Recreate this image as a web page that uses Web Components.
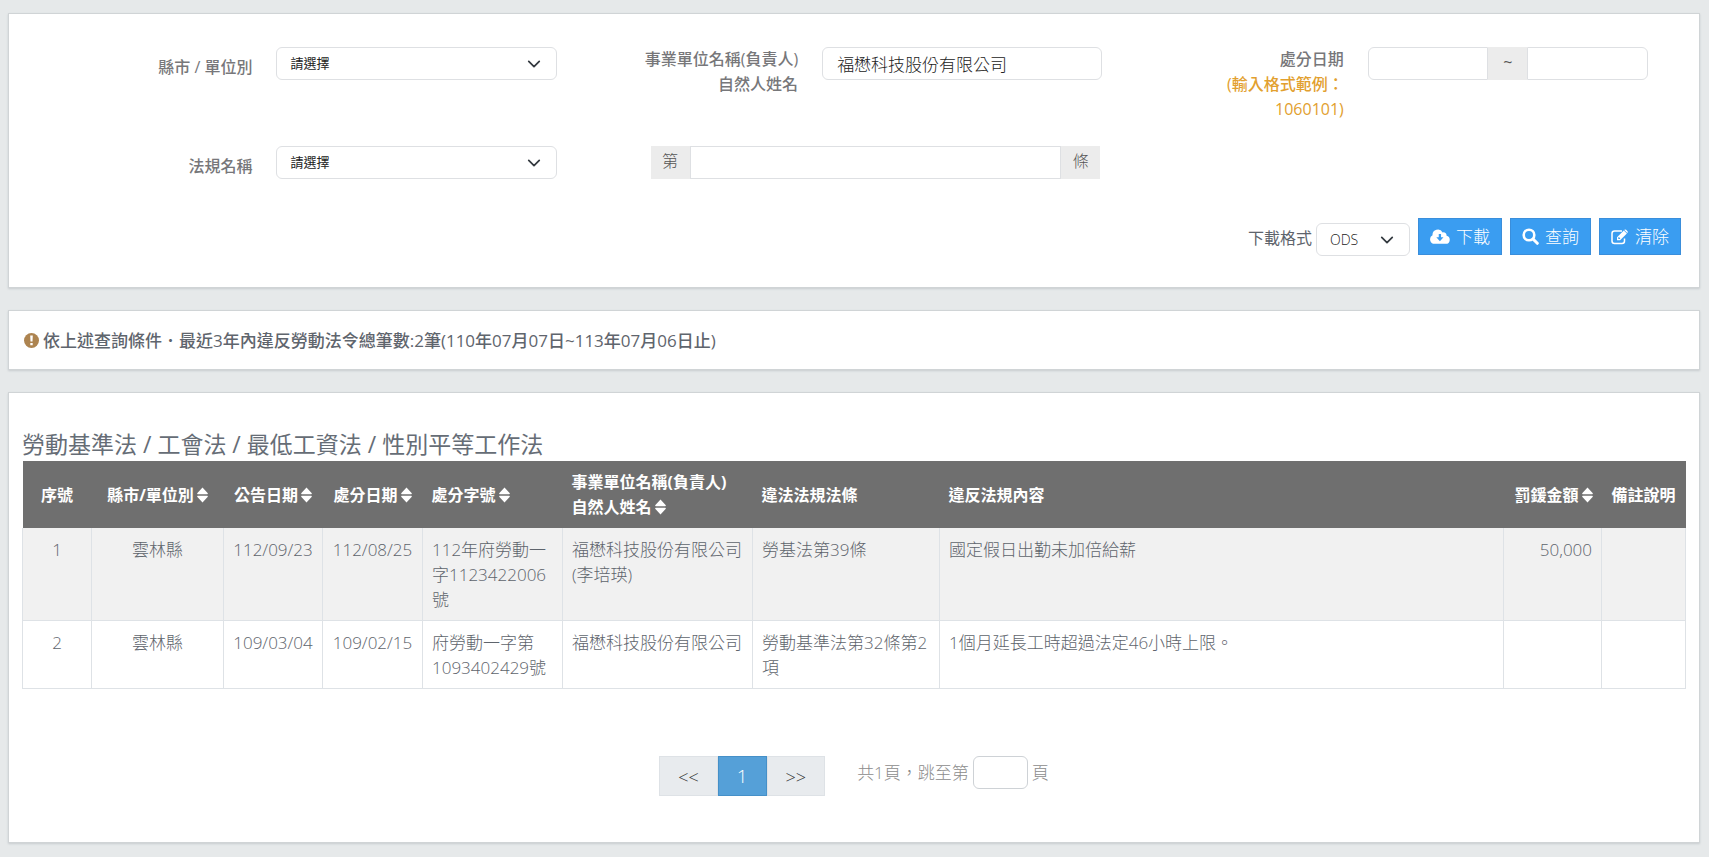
<!DOCTYPE html>
<html lang="zh-Hant">
<head>
<meta charset="utf-8">
<title>違反勞動法令查詢</title>
<style>
  body {
    margin: 0;
    background: #e6e9ea;
    color: #5e646c;
    font: 300 17px/25px "Open Sans", "Noto Sans CJK TC", sans-serif;
  }
</style>
</head>
<body>
<labor-page></labor-page>

<script>
const define = (name, html) => customElements.define(name, class extends HTMLElement {
  constructor() {
    super();
    const t = document.createElement('template');
    t.innerHTML = html;
    this.attachShadow({ mode: 'open' }).append(t.content.cloneNode(true));
  }
});

const base = `
  * { box-sizing: border-box; }
  input, select, button { font: inherit; margin: 0; }
  input {
    width: 100%; min-width: 0; height: 33px; padding: 0 14px;
    border: 1px solid #dee0e3; border-radius: 6px; background: #fff; color: #222; outline: 0;
  }`;

const selectCss = `
  select {
    appearance: none; width: 100%; height: 33px; padding: 0 13px; color: #222;
    font-size: 13px; font-weight: 400; line-height: 31px;
    border: 1px solid #dee0e3; border-radius: 6px;
    background: #fff url("data:image/svg+xml,%3Csvg xmlns='http://www.w3.org/2000/svg' viewBox='0 0 16 16'%3E%3Cpath fill='none' stroke='%23343a40' stroke-linecap='round' stroke-linejoin='round' stroke-width='2' d='m2 5 6 6 6-6'/%3E%3C/svg%3E") no-repeat right 15px center / 14px 14px;
  }`;

/* White card with a thin edge */
define('ui-panel', `
  <style>
    :host { display: block; background: #fff; border: 1px solid #d0d4d6; box-shadow: 0 1px 2px #c8cccf; }
  </style>
  <slot></slot>`);

/* Up and down triangles for sortable columns */
define('sort-mark', `
  <style>
    :host { display: inline-block; margin-left: 3px; }
    svg { display: block; }
  </style>
  <svg width="11" height="16" viewBox="0 0 11 16" fill="#fff" aria-hidden="true">
    <path d="M5.500 .5 10.800 6.300Q11 7.200 10.200 7.200H.8Q0 7.200 .2 6.300ZM5.500 15.500 10.800 9.700Q11 8.800 10.200 8.800H.8Q0 8.800 .2 9.700Z"/>
  </svg>`);

define('search-form', `
  <style>
    ${base} ${selectCss}
    :host { display: block; padding: 33px 18px 31px 14px; }
    .grid { display: grid; grid-template-columns: repeat(3, 1fr); row-gap: 24px; padding-right: 21px; }
    .field { display: flex; gap: 24px; padding-right: 12px; align-items: flex-start; }
    .field > label { flex: 0 0 43%; text-align: right; font-size: 16px; font-weight: 500; color: #77777a; }
    .field > label.low { padding-top: 8px; }
    .field > div { flex: 1; min-width: 0; }
    .hint { color: #e2a02f; }
    .group { display: flex; }
    .group span { flex: 0 0 39px; background: #ececec; text-align: center; line-height: 31px; color: #555; font-size: 16px; }
    .article { padding: 0 14px 0 15%; }
    .article input { border-radius: 0; }
    .dates span { font-weight: 400; }
    .dates input:first-child { border-radius: 6px 0 0 6px; }
    .dates input:last-child { border-radius: 0 6px 6px 0; }
    .actions { display: flex; justify-content: flex-end; gap: 8px; margin-top: 39px; }
    .format { display: flex; gap: 4px; padding-top: 5px; font-size: 16px; font-weight: 400; line-height: 31px; }
    .format select { width: 94px; font-size: 14px; font-weight: 300; background-position: right 15px center; }
    button {
      display: flex; align-items: center; gap: 6px; height: 37px; padding: 0 11px;
      color: #fff; background: #3a9df1; border: 1px solid #3a8edb; border-radius: 0;
    }
    svg { display: block; fill: #fff; }
  </style>
  <form>
    <div class="grid">
      <div class="field"><label class="low" for="city">縣市 / 單位別</label>
        <div><select id="city"><option>請選擇</option></select></div></div>
      <div class="field"><label for="unit">事業單位名稱(負責人)<br>自然人姓名</label>
        <div><input id="unit" value="福懋科技股份有限公司"></div></div>
      <div class="field"><label for="from">處分日期<br><span class="hint">(輸入格式範例：<br>1060101)</span></label>
        <div class="group dates"><input id="from"><span>~</span><input aria-label="處分日期迄"></div></div>
      <div class="field"><label class="low" for="law">法規名稱</label>
        <div><select id="law"><option>請選擇</option></select></div></div>
      <div class="group article"><span>第</span><input aria-label="條號"><span>條</span></div>
    </div>
    <div class="actions">
      <div class="format"><label for="fmt">下載格式</label><select id="fmt"><option>ODS</option></select></div>
      <button type="button">
        <svg width="20" height="15" viewBox="0 0 19 14" aria-hidden="true"><path fill-rule="evenodd" d="M4.300 14A4.300 4.300 0 0 1 2.400 5.900 5.100 5.100 0 0 1 12 3.100 2.900 2.900 0 0 1 15.700 6.300 3.900 3.900 0 0 1 15 14ZM8.300 4.600V7.800H6L9.400 11.400 12.800 7.800H10.500V4.600Z"/></svg>下載</button>
      <button type="button">
        <svg width="17" height="17" viewBox="0 0 17 17" aria-hidden="true"><circle cx="7" cy="7" r="5.300" fill="none" stroke="#fff" stroke-width="2.600"/><path d="m11 11 4.300 4.300" stroke="#fff" stroke-width="3" stroke-linecap="round"/></svg>查詢</button>
      <button type="button">
        <svg width="18" height="16" viewBox="0 0 18 16" aria-hidden="true"><path fill="none" stroke="#fff" stroke-width="1.500" d="M11 2H3.500Q1 2 1 4.500V12Q1 14.500 3.500 14.500H11Q13.500 14.500 13.500 12V9.500"/><path fill-rule="evenodd" d="M6 8.200 12.800 1.400 15.900 4.500 9.100 11.300H6ZM7.300 8.600V10H8.700L9.300 9.400 7.900 8ZM13.500.8Q14.300 0 15.100.8L16.500 2.200Q17.300 3 16.500 3.800L16.300 4 13.300 1Z"/></svg>清除</button>
    </div>
  </form>`);

define('result-notice', `
  <style>
    :host { display: flex; align-items: center; gap: 4px; padding: 17px 15px 16px; font-weight: 500; color: #5f656d; }
    svg { flex: none; }
  </style>
  <svg width="15" height="15" viewBox="0 0 15 15" aria-hidden="true"><circle cx="7.500" cy="7.500" r="7.500" fill="#ad8450"/><path fill="#fff" d="M6.200 2.600H8.800L8.500 8.600H6.500ZM6.300 9.900H8.700V12.200H6.300Z"/></svg>
  <span>依上述查詢條件．最近3年內違反勞動法令總筆數:2筆(110年07月07日~113年07月06日止)</span>`);

define('result-table', `
  <style>
    ${base}
    :host { display: block; }
    h2 { margin: 0; font-size: 23px; line-height: 34px; font-weight: 400; color: #666d76; }
    table { width: 100%; border-collapse: collapse; table-layout: fixed; }
    th, td { padding: 9px 9px 8px; text-align: left; }
    th { background: #6f6f6f; color: #fff; font-size: 16px; font-weight: 700; white-space: nowrap; }
    th sort-mark { vertical-align: -2px; }
    td { vertical-align: top; border: 1px solid #dee2e6; border-top: 0; }
    tbody tr:first-child td { background: #f1f1f1; }
    .c { text-align: center; }
    .r { text-align: right; }
  </style>
  <h2>勞動基準法 / 工會法 / 最低工資法 / 性別平等工作法</h2>
  <table>
    <colgroup>
      <col style="width:69px"><col style="width:132px"><col style="width:99px"><col style="width:100px"><col style="width:140px">
      <col style="width:190px"><col style="width:187px"><col><col style="width:98px"><col style="width:84px">
    </colgroup>
    <thead><tr>
      <th class="c">序號</th><th class="c">縣市/單位別<sort-mark></sort-mark></th><th class="c">公告日期<sort-mark></sort-mark></th>
      <th class="c">處分日期<sort-mark></sort-mark></th><th>處分字號<sort-mark></sort-mark></th>
      <th>事業單位名稱(負責人)<br>自然人姓名<sort-mark></sort-mark></th><th>違法法規法條</th><th>違反法規內容</th>
      <th class="r">罰鍰金額<sort-mark></sort-mark></th><th class="c">備註說明</th>
    </tr></thead>
    <tbody>
      <tr><td class="c">1</td><td class="c">雲林縣</td><td class="c">112/09/23</td><td class="c">112/08/25</td><td>112年府勞動一字1123422006號</td>
        <td>福懋科技股份有限公司(李培瑛)</td><td>勞基法第39條</td><td>國定假日出勤未加倍給薪</td><td class="r">50,000</td><td></td></tr>
      <tr><td class="c">2</td><td class="c">雲林縣</td><td class="c">109/03/04</td><td class="c">109/02/15</td><td>府勞動一字第1093402429號</td>
        <td>福懋科技股份有限公司</td><td>勞動基準法第32條第2項</td><td>1個月延長工時超過法定46小時上限。</td><td class="r"></td><td></td></tr>
    </tbody>
  </table>`);

define('page-nav', `
  <style>
    ${base}
    :host { display: flex; justify-content: center; align-items: flex-start; gap: 32px; color: #8c8c8c; }
    nav { display: flex; font-size: 18px; }
    a {
      height: 40px; min-width: 48px; padding: 0 18px; text-align: center; line-height: 40px; text-decoration: none;
      color: #333; background: #e8ebee; border: 1px solid #dee2e6;
    }
    a[aria-current] { color: #fff; background: #55a0d8; border-color: #4590c8; font-size: 19px; line-height: 38px; }
    .jump { display: flex; align-items: center; gap: 4px; }
    .jump input { width: 55px; border-color: #ced2d6; padding: 0 8px; }
  </style>
  <nav aria-label="分頁"><a href="#">&lt;&lt;</a><a href="#" aria-current="page">1</a><a href="#">&gt;&gt;</a></nav>
  <div class="jump"><label for="p">共1頁，跳至第</label><input id="p"><span>頁</span></div>`);

define('labor-page', `
  <style>
    :host { display: flex; flex-direction: column; gap: 22px; padding: 13px 9px 13px 8px; }
    .results { padding: 34px 13px 46px; }
    page-nav { margin-top: 67px; }
  </style>
  <ui-panel><search-form></search-form></ui-panel>
  <ui-panel><result-notice></result-notice></ui-panel>
  <ui-panel class="results"><result-table></result-table><page-nav></page-nav></ui-panel>`);
</script>
</body>
</html>
